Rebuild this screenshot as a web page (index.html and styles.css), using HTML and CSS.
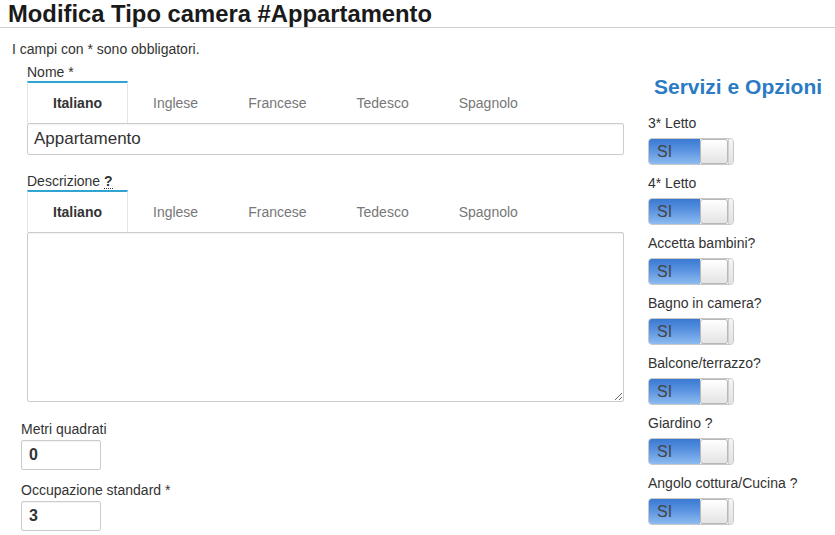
FILE: index.html
```html
<!DOCTYPE html>
<html lang="it">
<head>
<meta charset="utf-8">
<title>Modifica Tipo camera</title>
<link rel="stylesheet" href="styles.css">
</head>
<body>
<h1 class="page-title">Modifica Tipo camera #Appartamento</h1>
<p class="note">I campi con * sono obbligatori.</p>
<div class="cols">
  <div class="left">
    <div class="ml-field">
      <label class="lbl">Nome *</label>
      <ul class="tabs">
        <li class="tab active">Italiano</li>
        <li class="tab">Inglese</li>
        <li class="tab">Francese</li>
        <li class="tab">Tedesco</li>
        <li class="tab">Spagnolo</li>
      </ul>
      <input class="text-input" type="text" value="Appartamento">
    </div>
    <div class="ml-field desc">
      <label class="lbl">Descrizione <abbr class="help" title="">?</abbr></label>
      <ul class="tabs">
        <li class="tab active">Italiano</li>
        <li class="tab">Inglese</li>
        <li class="tab">Francese</li>
        <li class="tab">Tedesco</li>
        <li class="tab">Spagnolo</li>
      </ul>
      <textarea class="text-area"></textarea>
    </div>
    <div class="small-field first">
      <label class="lbl">Metri quadrati</label>
      <input class="num-input" type="text" value="0">
    </div>
    <div class="small-field">
      <label class="lbl">Occupazione standard *</label>
      <input class="num-input" type="text" value="3">
    </div>
  </div>
  <div class="right">
    <h2 class="side-title">Servizi e Opzioni</h2>
    <div class="opt"><div class="opt-lbl">3* Letto</div><div class="switch"><span class="on">SI</span><span class="knob"></span><span class="off"></span></div></div>
    <div class="opt"><div class="opt-lbl">4* Letto</div><div class="switch"><span class="on">SI</span><span class="knob"></span><span class="off"></span></div></div>
    <div class="opt"><div class="opt-lbl">Accetta bambini?</div><div class="switch"><span class="on">SI</span><span class="knob"></span><span class="off"></span></div></div>
    <div class="opt"><div class="opt-lbl">Bagno in camera?</div><div class="switch"><span class="on">SI</span><span class="knob"></span><span class="off"></span></div></div>
    <div class="opt"><div class="opt-lbl">Balcone/terrazzo?</div><div class="switch"><span class="on">SI</span><span class="knob"></span><span class="off"></span></div></div>
    <div class="opt"><div class="opt-lbl">Giardino ?</div><div class="switch"><span class="on">SI</span><span class="knob"></span><span class="off"></span></div></div>
    <div class="opt"><div class="opt-lbl">Angolo cottura/Cucina ?</div><div class="switch"><span class="on">SI</span><span class="knob"></span><span class="off"></span></div></div>
  </div>
</div>
</body>
</html>
```
FILE: styles.css
```css
* { box-sizing: border-box; }
html, body { margin: 0; padding: 0; background: #fff; }
body {
  font-family: "Liberation Sans", Arial, sans-serif;
  font-size: 14px;
  color: #333;
  overflow: hidden;
}
.page-title {
  margin: 0;
  padding: 1px 8px 0;
  font-size: 23.8px;
  line-height: 26px;
  font-weight: bold;
  color: #1a1a1a;
  border-bottom: 1px solid #cfcfcf;
}
.note {
  margin: 13px 0 0;
  padding-left: 12px;
  line-height: 17px;
}
.cols {
  display: flex;
  margin-top: 6px;
}
.left {
  width: 627px;
  padding-left: 21px;
}
.ml-field {
  margin-left: 6px;
  width: 597px;
}
.ml-field.desc { margin-top: 18px; }
.lbl {
  display: block;
  line-height: 17px;
  color: #333;
}
.help {
  font-weight: bold;
  text-decoration: none;
  border-bottom: 1px dotted #333;
  font-size: 14px;
  line-height: 14px;
  display: inline-block;
}
.tabs {
  list-style: none;
  margin: 0;
  padding: 0;
  display: flex;
}
.tab {
  height: 42px;
  line-height: 40px;
  padding: 0 24px;
  border: 1px solid transparent;
  border-top: 2px solid transparent;
  border-bottom: 0;
  color: #777;
  font-size: 14px;
}
.tab.active {
  border-color: #e3e3e3;
  border-top-color: #31a5d2;
  font-weight: bold;
  color: #333;
  padding: 0 25px;
}
.text-input {
  display: block;
  width: 100%;
  height: 32px;
  border: 1px solid #ccc;
  border-radius: 2px;
  padding: 0 6px;
  font-family: "Liberation Sans", Arial, sans-serif;
  font-size: 17px;
  color: #333;
  box-shadow: inset 0 1px 1px rgba(0,0,0,0.05);
  outline: none;
}
.text-area {
  display: block;
  width: 100%;
  height: 170px;
  margin: 0;
  border: 1px solid #ccc;
  border-radius: 2px;
  box-shadow: inset 0 1px 1px rgba(0,0,0,0.05);
  resize: both;
  font-family: "Liberation Sans", Arial, sans-serif;
  outline: none;
}
.small-field { margin-top: 12px; }
.small-field.first { margin-top: 19px; }
.num-input {
  display: block;
  margin-top: 2px;
  width: 80px;
  height: 30px;
  border: 1px solid #ccc;
  border-radius: 2px;
  padding: 0 7px;
  font-family: "Liberation Sans", Arial, sans-serif;
  font-size: 16px;
  font-weight: bold;
  color: #333;
  box-shadow: inset 0 1px 1px rgba(0,0,0,0.05);
  outline: none;
}
.right {
  padding-left: 21px;
  width: 208px;
}
.side-title {
  margin: 11px 0 0;
  padding-left: 6px;
  font-size: 21px;
  line-height: 24px;
  font-weight: bold;
  white-space: nowrap;
  color: #2a7bc4;
}
.opt { margin-top: 16px; }
.opt + .opt { margin-top: 10px; }
.opt-lbl {
  line-height: 17px;
  color: #333;
}
.switch {
  margin-top: 6px;
  width: 86px;
  height: 27px;
  border: 1px solid #c8c8c8;
  border-radius: 4px;
  overflow: hidden;
  display: flex;
  background: #eee;
}
.switch .on {
  width: 51px;
  height: 100%;
  background: linear-gradient(to bottom, #3a78d2 0%, #5a93e0 45%, #8dbbf1 100%);
  color: #444;
  font-size: 16px;
  line-height: 25px;
  padding-left: 8px;
}
.switch .knob {
  width: 28px;
  height: 100%;
  background: linear-gradient(to bottom, #ffffff, #e4e4e4);
  border: 1px solid #b8b8b8;
  border-radius: 3px;
}
.switch .off {
  flex: 1;
  background: linear-gradient(to bottom, #f4f4f4, #e2e2e2);
  border-left: 1px solid #d0d0d0;
}
```
